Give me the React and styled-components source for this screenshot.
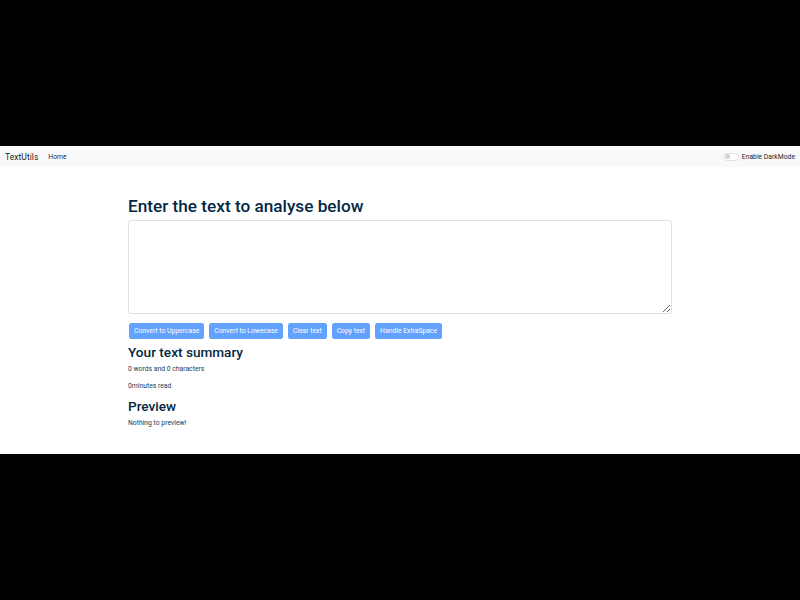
import React from "react";
import styled, { createGlobalStyle } from "styled-components";

const Global = createGlobalStyle`
  html, body {
    margin: 0;
    padding: 0;
    background: #000;
  }
  body {
    font-family: Roboto, "Liberation Sans", sans-serif;
  }
`;

const Screen = styled.div`
  width: 800px;
  height: 600px;
  display: flex;
  flex-direction: column;
  justify-content: center;
`;

const Page = styled.div`
  height: 308px;
  background: #fff;
  display: flex;
  flex-direction: column;
`;

const Nav = styled.nav`
  height: 21px;
  background: #f8f9fa;
  display: flex;
  align-items: center;
  padding: 0 5px;
`;

const Brand = styled.span`
  font-size: 8.6px;
  color: rgba(0, 0, 0, 0.9);
  margin-right: 10px;
`;

const NavLink = styled.span`
  font-size: 6.8px;
  color: rgba(0, 0, 0, 0.9);
  flex: 1;
`;

const Switch = styled.label`
  display: flex;
  align-items: center;
  gap: 3px;
  font-size: 6.8px;
  color: #212529;
`;

const Track = styled.span`
  width: 12px;
  height: 6px;
  border: 1px solid #dee2e6;
  border-radius: 4px;
  background: #fff;
  display: flex;
  align-items: center;
  padding: 0 1px;
  &::before {
    content: "";
    width: 5px;
    height: 5px;
    border-radius: 50%;
    background: #cfd3d7;
  }
`;

const Container = styled.main`
  width: 544px;
  margin: 0 auto;
  color: #042743;
  padding-top: 29px;
`;

const Title = styled.h1`
  margin: 0 0 3px;
  font-size: 17.2px;
  font-weight: 500;
  line-height: 21px;
`;

const Area = styled.textarea`
  display: block;
  box-sizing: border-box;
  width: 544px;
  height: 94px;
  border: 1px solid #dee2e6;
  border-radius: 3px;
  background: #fff;
  margin: 0;
`;

const Buttons = styled.div`
  display: flex;
  gap: 5px;
  margin: 9px 0 5px 1px;
`;

const Button = styled.button`
  height: 16px;
  padding: 0 5px;
  border: none;
  border-radius: 2.5px;
  background: #62a1fe;
  color: #fff;
  font-family: inherit;
  font-size: 6.8px;
  line-height: 16px;
`;

const SubTitle = styled.h2`
  margin: 0 0 4px;
  font-size: 13.6px;
  font-weight: 500;
  line-height: 17px;
`;

const Text = styled.p`
  margin: 0 0 ${(p) => p.$gap ?? 8}px;
  font-size: 6.8px;
  line-height: 9px;
  color: #1d3c56;
`;

export default function App() {
  return (
    <>
      <Global />
      <Screen>
        <Page>
          <Nav>
            <Brand>TextUtils</Brand>
            <NavLink>Home</NavLink>
            <Switch>
              <Track />
              Enable DarkMode
            </Switch>
          </Nav>
          <Container>
            <Title>Enter the text to analyse below</Title>
            <Area />
            <Buttons>
              <Button>Convert to Uppercase</Button>
              <Button>Convert to Lowecase</Button>
              <Button>Clear text</Button>
              <Button>Copy text</Button>
              <Button>Handle ExtraSpace</Button>
            </Buttons>
            <SubTitle>Your text summary</SubTitle>
            <Text>0 words and 0 characters</Text>
            <Text $gap={7}>0minutes read</Text>
            <SubTitle>Preview</SubTitle>
            <Text>Nothing to preview!</Text>
          </Container>
        </Page>
      </Screen>
    </>
  );
}
